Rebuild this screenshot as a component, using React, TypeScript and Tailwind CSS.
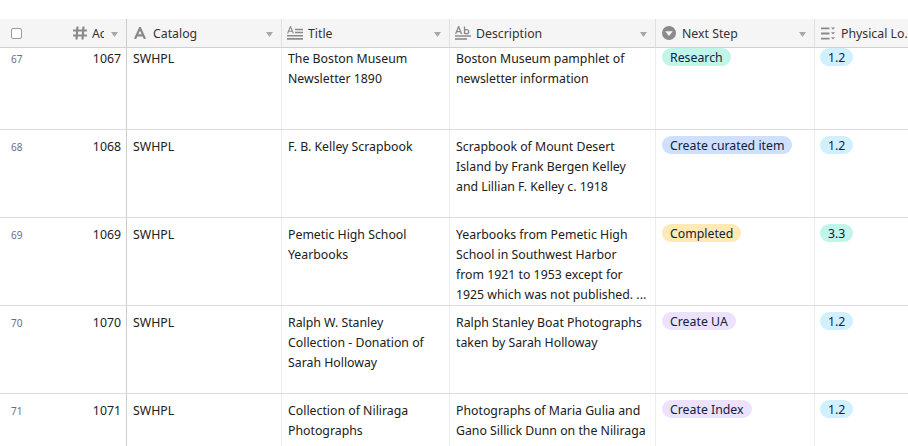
import React from 'react';

interface Row {
  num: number;
  ac: number;
  title: string[];
  desc: string[];
  step: string;
  stepClass: string;
  loc: string;
  locClass: string;
}

const rows: Row[] = [
  { num: 67, ac: 1067, title: ['The Boston Museum', 'Newsletter 1890'], desc: ['Boston Museum pamphlet of', 'newsletter information'], step: 'Research', stepClass: 'bg-[#c2f5e9]', loc: '1.2', locClass: 'bg-[#d0f0fd]' },
  { num: 68, ac: 1068, title: ['F. B. Kelley Scrapbook'], desc: ['Scrapbook of Mount Desert', 'Island by Frank Bergen Kelley', 'and Lillian F. Kelley c. 1918'], step: 'Create curated item', stepClass: 'bg-[#cfdfff]', loc: '1.2', locClass: 'bg-[#d0f0fd]' },
  { num: 69, ac: 1069, title: ['Pemetic High School', 'Yearbooks'], desc: ['Yearbooks from Pemetic High', 'School in Southwest Harbor', 'from 1921 to 1953 except for', '1925 which was not published. ...'], step: 'Completed', stepClass: 'bg-[#ffeab6]', loc: '3.3', locClass: 'bg-[#c2f5e9]' },
  { num: 70, ac: 1070, title: ['Ralph W. Stanley', 'Collection - Donation of', 'Sarah Holloway'], desc: ['Ralph Stanley Boat Photographs', 'taken by Sarah Holloway'], step: 'Create UA', stepClass: 'bg-[#ede2fe]', loc: '1.2', locClass: 'bg-[#d0f0fd]' },
  { num: 71, ac: 1071, title: ['Collection of Niliraga', 'Photographs'], desc: ['Photographs of Maria Gulia and', 'Gano Sillick Dunn on the Niliraga'], step: 'Create Index', stepClass: 'bg-[#ede2fe]', loc: '1.2', locClass: 'bg-[#d0f0fd]' },
];

const Caret = () => (
  <svg width="7" height="5" viewBox="0 0 7 5" className="shrink-0 mt-[2px]">
    <path d="M0 0h7L3.5 5z" fill="#a8a8a8" />
  </svg>
);

const NumberIcon = () => (
  <svg width="14" height="14" viewBox="0 0 14 14" className="shrink-0" stroke="#8a8a8a" strokeWidth="2.2" fill="none">
    <path d="M4.5 0.5L3.5 13.5M10.5 0.5L9.5 13.5M0 4.5h14M0 9.5h14" />
  </svg>
);

const TextIcon = () => (
  <svg width="12" height="12" viewBox="0 0 12 12" className="shrink-0" stroke="#8a8a8a" strokeWidth="2.2" fill="none">
    <path d="M1 12L6 1l5 11M2.8 8.3h6.4" />
  </svg>
);

const LongTextIcon = () => (
  <svg width="16" height="14" viewBox="0 0 16 14" className="shrink-0" fill="none" stroke="#8a8a8a">
    <path d="M0.6 7.5L3.5 0.5l2.9 7M1.6 5.3h3.8" strokeWidth="1.1" />
    <path d="M8 3.5h8M8 6.5h8" strokeWidth="1.3" />
    <path d="M0 9.8h16M0 12.9h16" strokeWidth="1.6" />
  </svg>
);

const RichTextIcon = () => (
  <svg width="16" height="14" viewBox="0 0 16 14" className="shrink-0" fill="none" stroke="#8a8a8a">
    <path d="M0.6 8L3.6 0.5l3 7.5M1.7 5.6h3.8" strokeWidth="1.3" />
    <path d="M9.5 0.5v7.5M9.5 5.8a2.1 2.1 0 1 0 4.2 0a2.1 2.1 0 1 0-4.2 0" strokeWidth="1.3" />
    <path d="M0 10h16" strokeWidth="1.5" />
    <path d="M0 13h12" strokeWidth="1.6" />
  </svg>
);

const SelectIcon = () => (
  <svg width="14" height="14" viewBox="0 0 14 14" className="shrink-0">
    <circle cx="7" cy="7" r="7" fill="#8a8a8a" />
    <path d="M3.2 5.2h7.6L7 10z" fill="#f5f5f5" />
  </svg>
);

const LookupIcon = () => (
  <svg width="14" height="13" viewBox="0 0 14 13" className="shrink-0" fill="#8a8a8a">
    <path d="M0 0.5h8.5v1.8H0zM0 5.6h8.5v1.8H0zM0 10.7h8.5v1.8H0z" />
    <path d="M10 0.5h4L12 2.8zM10 5.3h4L12 7.6zM10 10.2h4L12 12.5z" />
  </svg>
);

const HeaderCell = ({ icon, iconPad, label, caret = true, className = '' }: { icon: React.ReactNode; iconPad: string; label: string; caret?: boolean; className?: string }) => (
  <div className={`flex items-center shrink-0 h-full border-r border-[#e0e0e0] overflow-hidden ${className}`}>
    <span className={`w-[26px] shrink-0 flex ${iconPad}`}>{icon}</span>
    <span className="flex-1 pt-[2px] whitespace-nowrap overflow-hidden">{label}</span>
    {caret && <span className="flex pl-[4px] pr-[8px]"><Caret /></span>}
  </div>
);

const Pill = ({ text, color }: { text: string; color: string }) => (
  <span className={`block w-fit h-[18px] pt-[1px] leading-[18px] px-2 rounded-full whitespace-nowrap text-[#102040] ${color}`}>{text}</span>
);

const Lines = ({ lines }: { lines: string[] }) => (
  <>
    {lines.map(t => <div key={t} className="whitespace-nowrap">{t}</div>)}
  </>
);

export default function App() {
  return (
    <div className="w-[908px] h-[446px] flex flex-col overflow-hidden bg-white pt-[19px] text-[12.3px] text-[#202020] font-['Noto_Sans','Open_Sans',sans-serif]">
      <div className="flex shrink-0 h-[29px] bg-[#f5f5f5] border-b border-[#d0d0d0] text-[#333]">
        <div className="w-[127px] shrink-0 h-full flex items-center pl-[11px] border-r border-[#cccccc]">
          <span className="w-[11px] h-[11px] rounded-[2px] border border-[#9a9a9a] bg-white shrink-0" />
          <span className="ml-[51px] flex"><NumberIcon /></span>
          <span className="ml-[5px] pt-[2px] w-[12px] overflow-hidden whitespace-nowrap">Acc</span>
          <span className="ml-[7px] flex"><Caret /></span>
        </div>
        <HeaderCell icon={<TextIcon />} iconPad="pl-[7px]" label="Catalog" className="w-[155px]" />
        <HeaderCell icon={<LongTextIcon />} iconPad="pl-[5px]" label="Title" className="w-[168px]" />
        <HeaderCell icon={<RichTextIcon />} iconPad="pl-[5px]" label="Description" className="w-[206px]" />
        <HeaderCell icon={<SelectIcon />} iconPad="pl-[6px]" label="Next Step" className="w-[159px]" />
        <HeaderCell icon={<LookupIcon />} iconPad="pl-[6px]" label="Physical Lo..." caret={false} className="w-[93px] border-r-0" />
      </div>
      <div className="flex-1 overflow-hidden">
        <div className="-mt-[6px]">
          {rows.map(r => (
            <div key={r.num} className="flex h-[88px] border-b border-[#dddddd] leading-[20px]">
              <div className="w-[127px] shrink-0 flex justify-between pl-[11px] pr-[5px] pt-[7px] border-r border-[#cccccc]">
                <span className="text-[10px] text-[#6b7080]">{r.num}</span>
                <span>{r.ac}</span>
              </div>
              <div className="w-[155px] shrink-0 px-[6px] pt-[7px] border-r border-[#eeeeee]">SWHPL</div>
              <div className="w-[168px] shrink-0 px-[6px] pt-[7px] border-r border-[#eeeeee]">
                <Lines lines={r.title} />
              </div>
              <div className="w-[206px] shrink-0 px-[6px] pt-[7px] border-r border-[#eeeeee] overflow-hidden">
                <Lines lines={r.desc} />
              </div>
              <div className="w-[159px] shrink-0 px-[6px] pt-[6px] border-r border-[#eeeeee]">
                <Pill text={r.step} color={r.stepClass} />
              </div>
              <div className="w-[93px] shrink-0 px-[5px] pt-[6px]">
                <Pill text={r.loc} color={r.locClass} />
              </div>
            </div>
          ))}
        </div>
      </div>
    </div>
  );
}
